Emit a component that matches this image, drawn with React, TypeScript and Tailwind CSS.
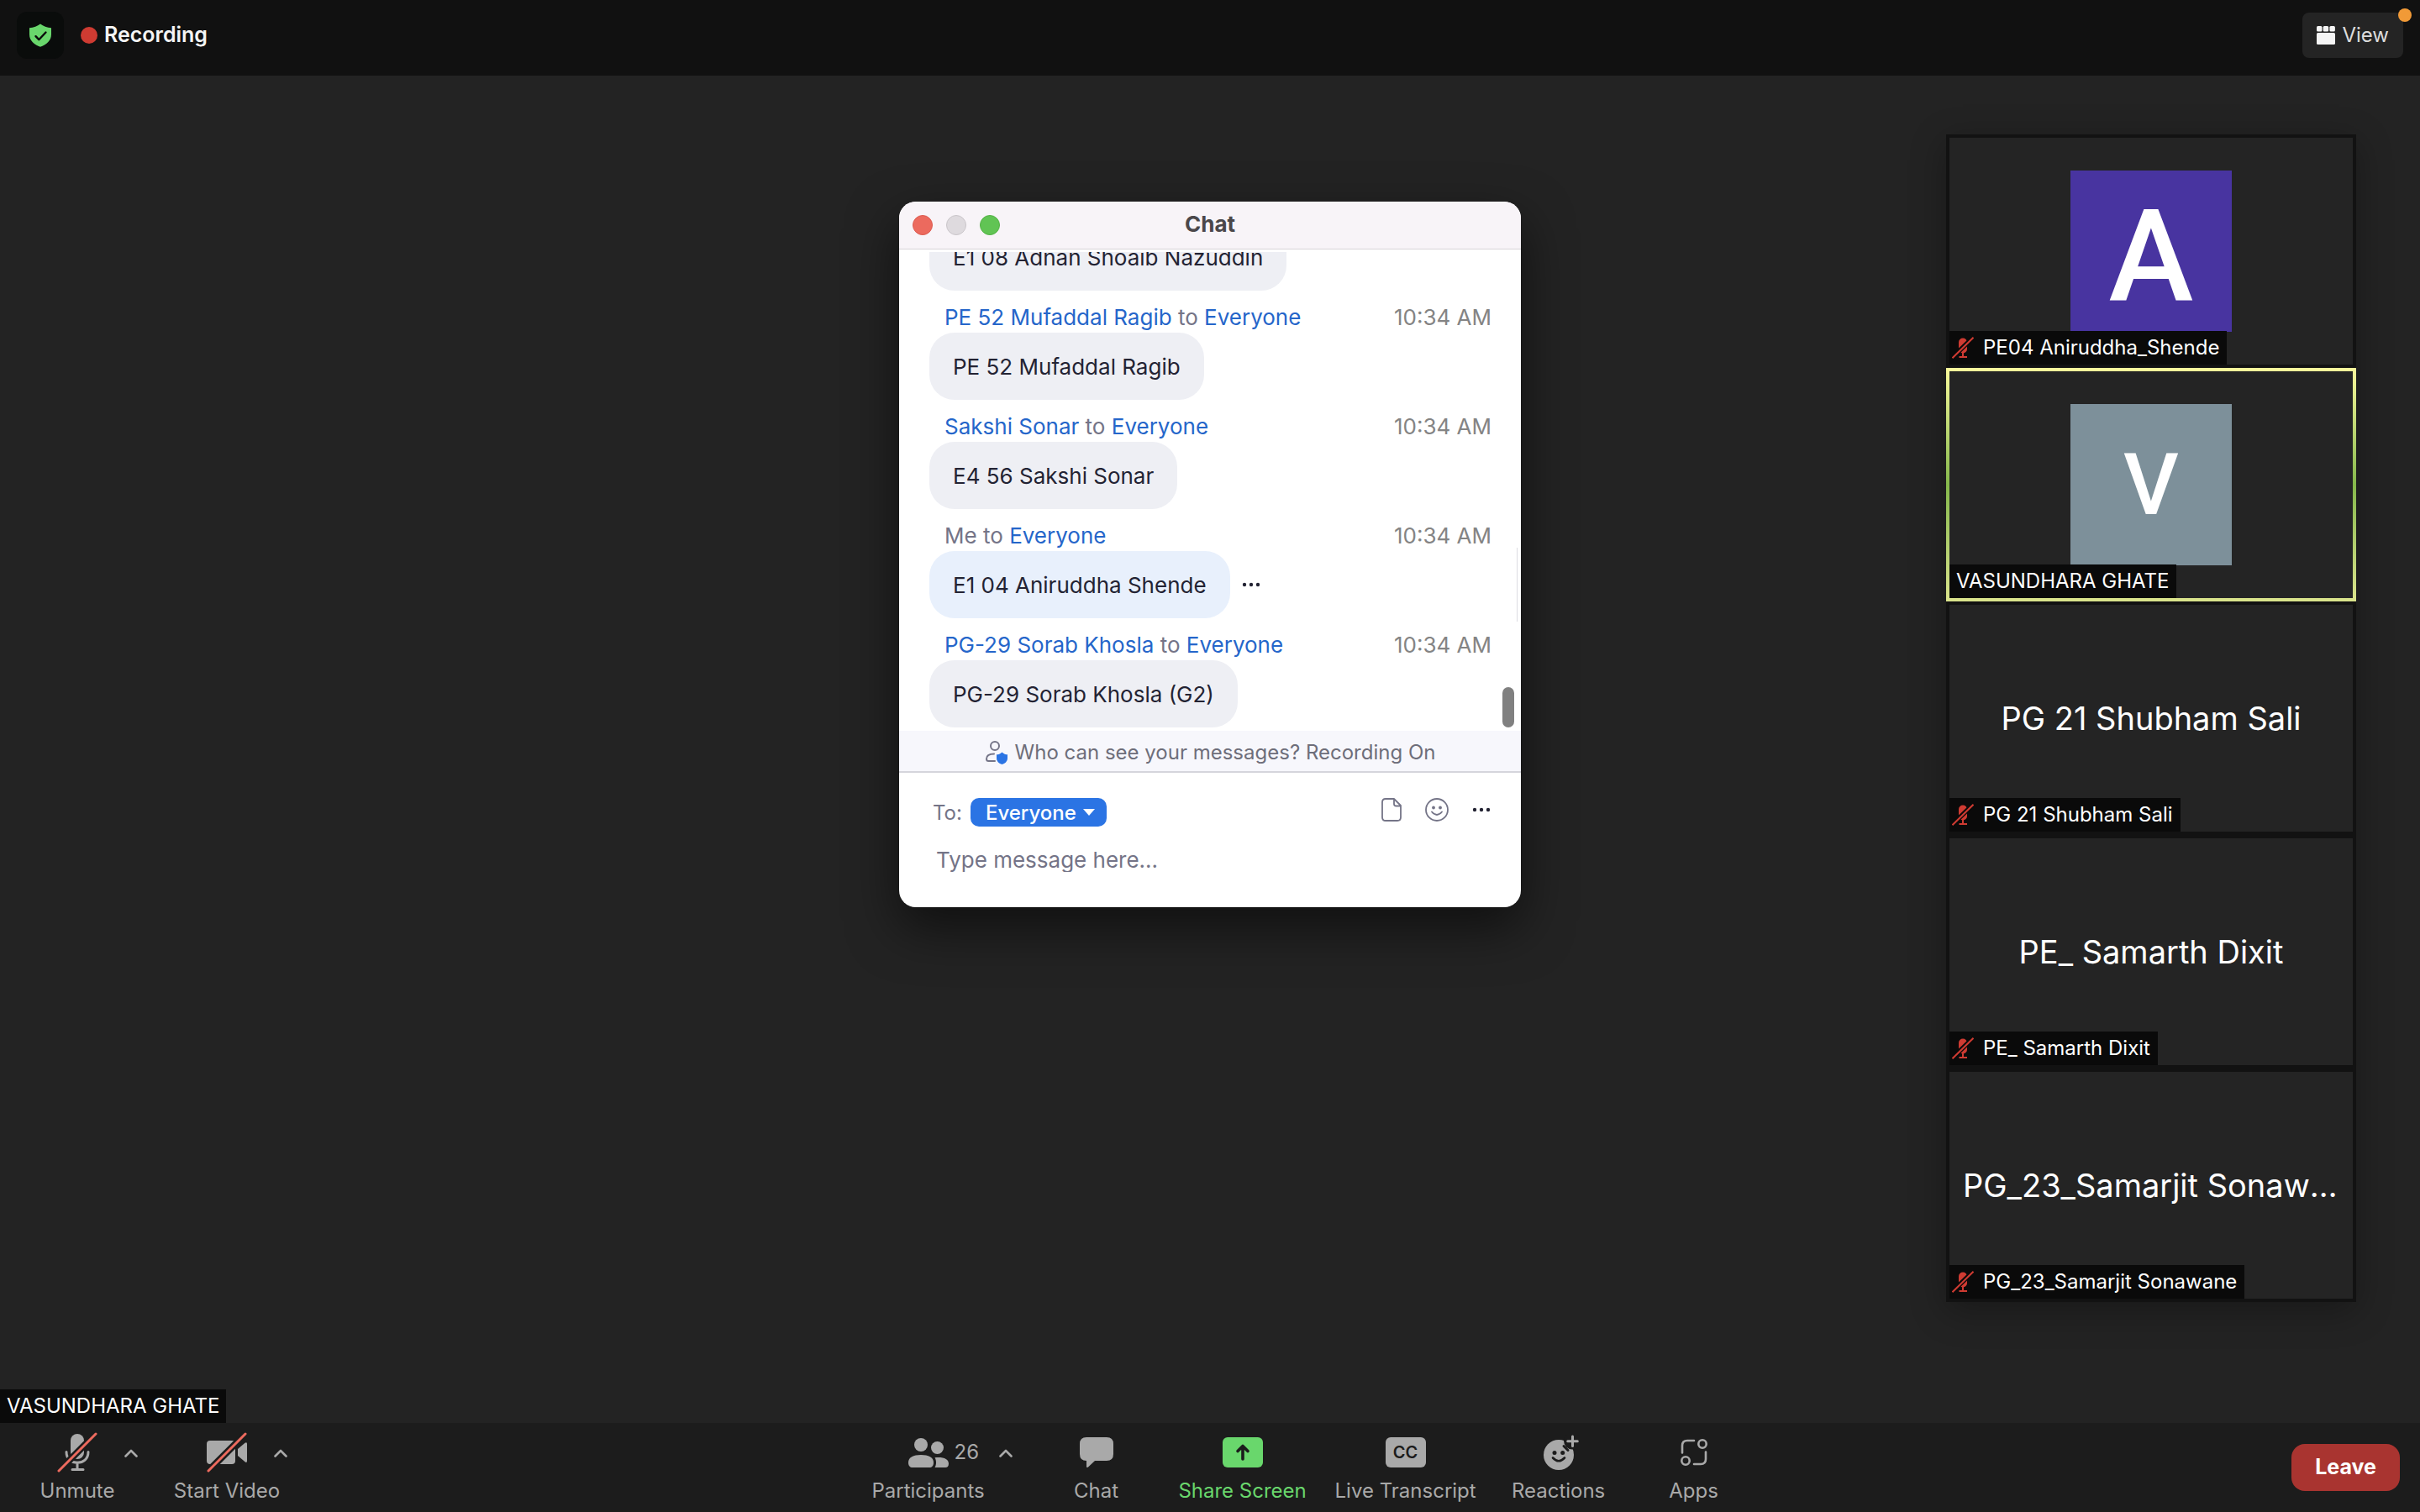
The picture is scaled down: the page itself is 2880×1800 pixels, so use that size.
import React from "react";

const Shield = () => (
  <svg viewBox="0 0 28 28" className="size-7" aria-hidden="true">
    <path d="M14 0.5C10.5 3 6 5 1 5.2V13C1 20.5 7 25.5 14 27.8 21 25.5 27 20.5 27 13V5.2C22 5 17.500 3 14 0.500Z" fill="#69d76c" />
    <path d="M8.500 15.200 12.300 19.200 20.500 10.500" fill="none" stroke="#0a0c0b" strokeWidth="2.400" strokeLinecap="round" strokeLinejoin="round" />
  </svg>
);

const ViewIcon = () => (
  <svg viewBox="0 0 22 22" className="size-[22px]" fill="#f5f5f5" aria-hidden="true">
    <rect x="0" y="0" width="6.500" height="6.500" rx="1.500" />
    <rect x="7.700" y="0" width="6.500" height="6.500" rx="1.500" />
    <rect x="15.400" y="0" width="6.500" height="6.500" rx="1.500" />
    <rect x="0" y="8" width="22" height="14" rx="1.500" />
  </svg>
);

const MutedMic = () => (
  <svg viewBox="0 0 26 26" className="size-[26px] shrink-0" aria-label="Muted">
    <rect x="8" y="1.500" width="10" height="18" rx="5" fill="#cf3b32" />
    <path d="M13 19v5M8.500 24h9.500" stroke="#cf3b32" strokeWidth="2" fill="none" />
    <path d="M0 25 26 0" stroke="#0a0a0a" strokeWidth="5.500" />
    <path d="M0.500 25.200 25.500 0.800" stroke="#cf3b32" strokeWidth="2" />
  </svg>
);

const MicOff = () => (
  <svg viewBox="0 0 48 48" className="size-12" aria-hidden="true">
    <rect x="16" y="2" width="16" height="30" rx="8" fill="#a9a9a9" />
    <path d="M11 23.500C11 32 17 36.200 24 36.200S37 32 37 23.500M24 36v8M18 44.500h13" stroke="#a9a9a9" strokeWidth="3" strokeLinecap="round" fill="none" />
    <path d="M0 48 48 0" stroke="#1c1c1c" strokeWidth="8" />
    <path d="M2 46 46 2" stroke="#ec6a5e" strokeWidth="3" strokeLinecap="round" />
  </svg>
);

const VideoOff = () => (
  <svg viewBox="0 0 48 48" className="size-12" aria-hidden="true">
    <rect x="0" y="10" width="34" height="28" rx="4" fill="#a9a9a9" />
    <path d="M37 20 45.500 12.800Q48 11 48 14V34Q48 37 45.500 35.200L37 28Z" fill="#a9a9a9" />
    <path d="M0 48 48 0" stroke="#1c1c1c" strokeWidth="8" />
    <path d="M2 46 46 2" stroke="#ec6a5e" strokeWidth="3" strokeLinecap="round" />
  </svg>
);

const Caret = () => (
  <svg viewBox="0 0 16 10" className="h-[10px] w-4" aria-hidden="true">
    <path d="M1.500 8.500 8 2 14.500 8.500" fill="none" stroke="#a9a9a9" strokeWidth="2.600" strokeLinecap="round" strokeLinejoin="round" />
  </svg>
);

const People = () => (
  <svg viewBox="0 0 48 36" className="h-9 w-12" fill="#a9a9a9" aria-hidden="true">
    <circle cx="15" cy="9" r="8" />
    <circle cx="34.500" cy="12.500" r="7.500" />
    <path d="M0 30C0 24 6 21 15 21S30 24 30 30C30 34 28 36 25 36H5C2 36 0 34 0 30Z" />
    <path d="M31.500 24.300C42 23.300 48 26 48 31.500 48 34.500 46.500 36 44 36H31.500C33.500 33 33.500 27.500 31.500 24.300Z" />
  </svg>
);

const ChatIcon = () => (
  <svg viewBox="0 0 40 36" className="h-9 w-10" fill="#a9a9a9" aria-hidden="true">
    <path d="M8 0H32Q40 0 40 8V20Q40 28 32 28H18L10 35.500Q8 37 8 34.500V28Q0 28 0 20V8Q0 0 8 0Z" />
  </svg>
);

const ShareIcon = () => (
  <svg viewBox="0 0 48 36" className="h-9 w-12" aria-hidden="true">
    <rect width="48" height="36" rx="6" fill="#69d76c" />
    <path d="M24 26V11M18 16.500 24 10.500 30 16.500" fill="none" stroke="#1c1c1c" strokeWidth="3.600" strokeLinecap="round" strokeLinejoin="round" />
  </svg>
);

const ReactionIcon = () => (
  <svg viewBox="0 0 48 42" className="h-[42px] w-12" aria-hidden="true">
    <circle cx="24" cy="24" r="18" fill="#a9a9a9" />
    <circle cx="40" cy="7.500" r="10" fill="#1c1c1c" />
    <path d="M30 13.500 35 18.500" stroke="#1c1c1c" strokeWidth="3" strokeLinecap="round" />
    <path d="M40.500 2V13.500M34.700 7.700H46.300" stroke="#a9a9a9" strokeWidth="3" strokeLinecap="round" />
    <circle cx="19" cy="21.500" r="2.500" fill="#1c1c1c" />
    <circle cx="28.700" cy="21.500" r="2.500" fill="#1c1c1c" />
    <path d="M17 27.500Q24 35 31 27.500" fill="none" stroke="#1c1c1c" strokeWidth="2.600" strokeLinecap="round" />
  </svg>
);

const AppsIcon = () => (
  <svg viewBox="0 0 32 32" className="size-8" fill="none" stroke="#a9a9a9" strokeWidth="2.600" strokeLinecap="round" aria-hidden="true">
    <path d="M2 16.500V8Q2 2 8 2H16M30 15.500V24Q30 30 24 30H16" />
    <circle cx="26" cy="6" r="4.700" />
    <circle cx="6" cy="26" r="4.700" />
  </svg>
);

const Dots = () => (
  <svg viewBox="0 0 22 6" className="h-[6px] w-[22px]" fill="#232333" aria-hidden="true">
    <circle cx="3" cy="3" r="2.200" />
    <circle cx="11" cy="3" r="2.200" />
    <circle cx="19" cy="3" r="2.200" />
  </svg>
);

const PrivacyIcon = () => (
  <svg viewBox="0 0 28 28" className="size-7" fill="none" stroke="#747487" strokeWidth="2" aria-hidden="true">
    <circle cx="12" cy="6" r="5" />
    <path d="M11 15.500C5 15.500 2 18 2 21.500Q2 24 4.500 24H12" strokeLinecap="round" />
    <path d="M20.500 13.500C18.500 15.500 16 16.300 14 16.300V20.500C14 24.500 17 27 20.500 28 24 27 27 24.500 27 20.500V16.300C25 16.300 22.500 15.500 20.500 13.500Z" fill="#2b74e4" stroke="none" />
  </svg>
);

const FileIcon = () => (
  <svg viewBox="0 0 24 28" className="h-7 w-6" fill="none" stroke="#747487" strokeWidth="1.800" strokeLinejoin="round" aria-hidden="true">
    <path d="M5 1H15L23 9V23Q23 27 19 27H5Q1 27 1 23V5Q1 1 5 1ZM15 1V7Q15 9.500 17.500 9.500H23" />
  </svg>
);

const Smile = () => (
  <svg viewBox="0 0 28 28" className="size-7" aria-hidden="true">
    <circle cx="14" cy="14" r="13" fill="none" stroke="#747487" strokeWidth="1.800" />
    <circle cx="10" cy="11.500" r="1.900" fill="#747487" />
    <circle cx="18" cy="11.500" r="1.900" fill="#747487" />
    <path d="M8 16.500Q14 23.500 20 16.500" fill="none" stroke="#747487" strokeWidth="1.800" strokeLinecap="round" />
  </svg>
);

type Message = { from?: string; me?: boolean; text: string };

const messages: Message[] = [
  { text: "E1 08 Adnan Shoaib Nazuddin" },
  { from: "PE 52 Mufaddal Ragib", text: "PE 52 Mufaddal Ragib" },
  { from: "Sakshi Sonar", text: "E4 56 Sakshi Sonar" },
  { from: "Me", me: true, text: "E1 04 Aniruddha Shende" },
  { from: "PG-29 Sorab Khosla", text: "PG-29 Sorab Khosla (G2)" },
];

function MessageItem({ from, me, text }: Message) {
  return (
    <li className="shrink-0">
      {from && (
        <div className="flex h-[50px] items-end justify-between pr-[35px] pl-[54px] leading-9">
          <span className="text-[#747487]">
            <span className={me ? "" : "text-[#2566ca]"}>{from}</span> to <span className="text-[#2566ca]">Everyone</span>
          </span>
          <time className="text-[#848484]">10:34 AM</time>
        </div>
      )}
      <div className="flex items-center gap-[14px] pl-9">
        <p className={`flex h-20 items-center rounded-[30px] px-7 text-[#232333] ${me ? "bg-[#e8f0fc]" : "bg-[#eeeff4]"}`}>{text}</p>
        {me && (
          <button type="button" aria-label="Message options">
            <Dots />
          </button>
        )}
      </div>
    </li>
  );
}

function ChatWindow() {
  return (
    <section aria-label="Chat" className="mt-[150px] w-[740px] self-start overflow-hidden rounded-[20px] bg-white text-[26px] shadow-[0_24px_60px_rgba(0,0,0,0.55)]">
      <header className="grid h-[57px] grid-cols-3 items-center border-b border-[#d9d5d9] bg-[#f8f4f8] px-4">
        <div className="flex gap-4">
          <button type="button" aria-label="Close" className="size-6 rounded-full border border-[#dc5a4f] bg-[#ec6a5e]" />
          <button type="button" aria-label="Minimize" className="size-6 rounded-full border border-[#c9c5c9] bg-[#dedade]" />
          <button type="button" aria-label="Zoom" className="size-6 rounded-full border border-[#53b145] bg-[#61c454]" />
        </div>
        <h1 className="pb-[3px] text-center font-bold text-[#4a474a]">Chat</h1>
      </header>
      <div className="relative mt-[3px]">
        <ul className="flex h-[570px] flex-col justify-end overflow-hidden pb-1">
          {messages.map((m) => (
            <MessageItem key={m.text} {...m} />
          ))}
        </ul>
        <div className="absolute top-[352px] right-1 h-[88px] w-px bg-[#dcdce2]" />
        <div className="absolute right-2 bottom-1 h-12 w-[14px] rounded-full bg-[#808080]" />
      </div>
      <div className="flex h-[50px] items-center justify-center gap-2 border-b-2 border-[#d5d5dc] bg-[#f7f7fc] pt-[3px] text-[24px] text-[#6e6e7a]">
        <PrivacyIcon />
        Who can see your messages? Recording On
      </div>
      <div className="flex h-[88px] items-center justify-between pr-9 pl-10 text-[24px]">
        <div className="flex items-center gap-[10px] pt-2">
          <label htmlFor="recipient" className="text-[#747487]">To:</label>
          <div className="relative">
            <select id="recipient" className="h-[34px] appearance-none rounded-[10px] bg-[#2b74e4] pr-9 pl-[18px] font-medium text-white">
              <option>Everyone</option>
            </select>
            <svg viewBox="0 0 14 8" className="pointer-events-none absolute top-[13px] right-[14px] h-2 w-[14px]" fill="#fff" aria-hidden="true">
              <path d="M0 0H14L7 8Z" />
            </svg>
          </div>
        </div>
        <div className="flex items-center gap-7">
          <button type="button" aria-label="Send file"><FileIcon /></button>
          <button type="button" aria-label="Emoji"><Smile /></button>
          <button type="button" aria-label="More"><Dots /></button>
        </div>
      </div>
      <input aria-label="Message" placeholder="Type message here..." className="mb-[42px] block h-[30px] w-full pr-9 pl-11 outline-none placeholder:text-[#747487]" />
    </section>
  );
}

type Person = { name: string; muted?: boolean; active?: boolean; avatar?: React.ReactNode };

const people: Person[] = [
  {
    name: "PE04 Aniruddha_Shende",
    muted: true,
    avatar: <div className="flex size-48 items-center justify-center bg-[#4834a0] pt-3 font-['Roboto',sans-serif] text-[152px] leading-none font-medium text-white">A</div>,
  },
  {
    name: "VASUNDHARA GHATE",
    active: true,
    avatar: <div className="flex size-48 items-center justify-center bg-[#7d909a] font-['Roboto',sans-serif] text-[102px] leading-none font-medium text-white">V</div>,
  },
  { name: "PG 21 Shubham Sali", muted: true },
  { name: "PE_ Samarth Dixit", muted: true },
  { name: "PG_23_Samarjit Sonawane", muted: true },
];

function Tile({ name, muted, active, avatar }: Person) {
  return (
    <li className={`p-1 ${active ? "bg-linear-to-b from-[#fafa9c] via-[#85b84b] to-[#dbe48c]" : "bg-[#121212]"}`}>
      <div className="relative flex h-[270px] items-center justify-center bg-[#242424]">
        {avatar ?? <span className="truncate px-4 text-[38px] text-white">{name}</span>}
        <div className="absolute bottom-0 left-0 flex h-10 items-center gap-[11px] bg-[#0a0a0a] pr-[9px] pl-[3px] text-white">
          {muted ? <MutedMic /> : null}
          <span className={muted ? "" : "pl-[5px]"}>{name}</span>
        </div>
      </div>
    </li>
  );
}

function Tool({ label, children, className = "" }: { label: string; children: React.ReactNode; className?: string }) {
  return (
    <button type="button" className={`flex h-[106px] flex-col items-center whitespace-nowrap ${className}`}>
      <span className="flex h-[70px] items-center justify-center">{children}</span>
      <span className="leading-[22px]">{label}</span>
    </button>
  );
}

function CaretButton({ label }: { label: string }) {
  return (
    <button type="button" aria-label={label} className="flex h-[72px] w-10 items-center justify-center">
      <Caret />
    </button>
  );
}

export default function App() {
  return (
    <div className="flex min-h-screen flex-col bg-[#232323] font-['Inter',sans-serif] text-[24px]">
      <header className="flex h-[90px] items-center justify-between bg-[#111111] px-5 pb-[6px]">
        <div className="flex items-center">
          <button type="button" aria-label="Meeting information" className="flex size-14 items-center justify-center rounded-xl bg-[#0a0c0b]">
            <Shield />
          </button>
          <span className="ml-5 size-5 rounded-full bg-[#cf3b32]" />
          <span className="ml-2 text-[25px] font-semibold text-[#f5f5f5]">Recording</span>
        </div>
        <button type="button" className="relative flex h-[54px] items-center gap-2 rounded-lg bg-[#242424] px-[17px] text-[#dcdcdc]">
          <ViewIcon />
          View
          <span className="absolute -top-[5px] -right-[10px] size-4 rounded-full bg-[#f19a37]" />
        </button>
      </header>

      <main className="grid flex-1 grid-cols-[1fr_auto_1fr]">
        <div className="flex h-10 items-center self-end justify-self-start bg-[#0a0a0a] px-2 text-white">VASUNDHARA GHATE</div>
        <ChatWindow />
        <ul className="mt-[70px] mr-[76px] w-[488px] self-start justify-self-end shadow-[0_10px_40px_rgba(0,0,0,0.3)]">
          {people.map((p) => (
            <Tile key={p.name} {...p} />
          ))}
        </ul>
      </main>

      <footer className="flex h-[106px] items-start justify-between bg-[#1c1c1c] pr-6 text-[#a9a9a9]">
        <div className="flex">
          <Tool label="Unmute" className="ml-7 w-32"><MicOff /></Tool>
          <div className="-ml-5 flex"><CaretButton label="Audio options" /></div>
          <Tool label="Start Video" className="ml-6 w-[140px]"><VideoOff /></Tool>
          <div className="-ml-[26px] flex"><CaretButton label="Video options" /></div>
        </div>
        <div className="flex">
          <Tool label="Participants" className="w-[168px]">
            <span className="w-[58px]" />
            <People />
            <span className="w-[58px] pl-[7px] text-left">26</span>
          </Tool>
          <div className="-ml-3 flex"><CaretButton label="Participant options" /></div>
          <Tool label="Chat" className="ml-[34px] w-[108px]"><ChatIcon /></Tool>
          <Tool label="Share Screen" className="ml-[27px] w-[186px] text-[#69d76c]"><ShareIcon /></Tool>
          <Tool label="Live Transcript" className="w-[202px]">
            <span className="flex h-9 w-12 items-center justify-center rounded-md bg-[#a9a9a9] text-[20px] font-semibold text-[#1c1c1c]">CC</span>
          </Tool>
          <Tool label="Reactions" className="ml-2 w-[146px]"><ReactionIcon /></Tool>
          <Tool label="Apps" className="ml-[43px] w-[90px]"><AppsIcon /></Tool>
        </div>
        <button type="button" className="mt-[25px] h-14 rounded-2xl bg-[#a93430] px-7 text-[25px] font-bold text-white">Leave</button>
      </footer>
    </div>
  );
}
